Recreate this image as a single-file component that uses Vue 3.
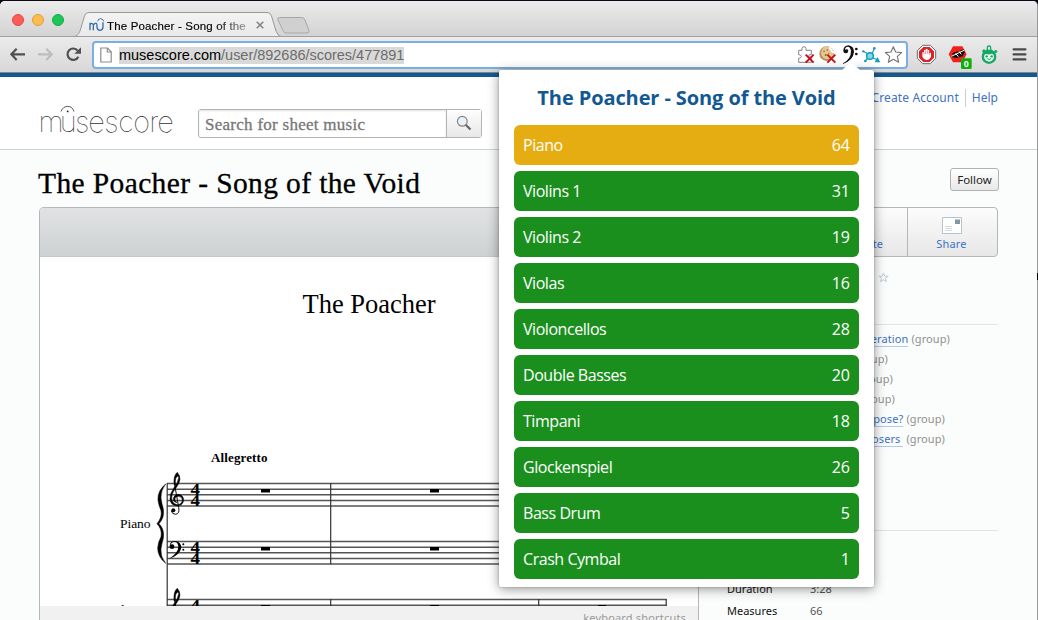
<script setup>
const parts = [
  { name: 'Piano', count: 64, active: true },
  { name: 'Violins 1', count: 31 },
  { name: 'Violins 2', count: 19 },
  { name: 'Violas', count: 16 },
  { name: 'Violoncellos', count: 28 },
  { name: 'Double Basses', count: 20 },
  { name: 'Timpani', count: 18 },
  { name: 'Glockenspiel', count: 26 },
  { name: 'Bass Drum', count: 5 },
  { name: 'Crash Cymbal', count: 1 },
]

const groups = [
  { link: 'eration', width: 237 },
  { link: '', width: 175 },
  { link: '', width: 180 },
  { link: '', width: 182 },
  { link: 'pose?', width: 232 },
  { link: 'osers ', width: 232 },
]

const staffLines = [483.6, 489.2, 494.7, 500.4, 505.9, 541.6, 547.2, 552.8, 558.4, 563.9]
</script>

<template>
  <div class="screen">
    <div class="window">
      <div class="tabstrip">
        <div class="lights">
          <i class="light red"></i><i class="light yellow"></i><i class="light green"></i>
        </div>
        <div class="tab">
          <svg class="tab-shape" width="240" height="25" viewBox="73 12 240 25">
            <defs>
              <linearGradient id="tabg" x1="0" y1="0" x2="0" y2="1">
                <stop offset="0" stop-color="#f3f3f3" />
                <stop offset="1" stop-color="#e9e9e9" />
              </linearGradient>
            </defs>
            <path d="M73 37C78 36 79 33 80 31L84.500 16Q85.500 12.500 89 12.500H267Q270.500 12.500 271.500 16L276 31Q278 36.500 282 37Z" fill="url(#tabg)" stroke="#999" />
            <path d="M279.500 17.500H302Q304 17.500 305 20L309 30.500Q309.500 33 307 33H286Q284 33 283 30.500L278 20Q277 17.500 279.500 17.500Z" fill="#d0d0d0" stroke="#a6a6a6" />
          </svg>
          <svg class="favicon" width="16" height="15" viewBox="267 54 48 45">
            <g fill="none" stroke="#356fa8" stroke-width="4">
              <path d="M270 91V68M270 75Q276 65 280 75V91M280 75Q289 64 291 75V83Q293 91 300 91Q309 90 309 81V67" />
              <path d="M293 64Q294 56 302 56Q310 57 311 64" stroke-width="3" />
            </g>
          </svg>
          <span class="tab-title">The Poacher - Song of the</span>
          <svg class="tab-close" width="8" height="8" viewBox="0 0 8 8"><path d="M.7.7L7.300 7.300M7.300.7L.7 7.300" stroke="#808080" stroke-width="1.500" /></svg>
        </div>
      </div>

      <div class="toolbar">
        <svg width="92" height="35" viewBox="0 111 276 105" fill="none">
          <path d="M34 163H75M50 146L34 163L50 180" stroke="#505050" stroke-width="6.500" />
          <path d="M114 163H155M139 146L155 163L139 180" stroke="#bdbdbd" stroke-width="6.500" />
          <path d="M233 152A17 17 0 1 0 235 170" stroke="#505050" stroke-width="6.500" />
          <path d="M243 142V161H223Z" fill="#505050" />
        </svg>
        <div class="omnibox">
          <svg class="page-icon" width="12" height="16" viewBox="0 0 12 16"><path d="M.8 1H7.500L11.200 4.700V15H.8ZM7.300 1V5H11.200" fill="#fff" stroke="#8c8c8c" stroke-width="1.200" /></svg>
          <span class="url"><b>musescore.com</b>/user/892686/scores/477891</span>
          <span class="spacer"></span>
          <svg width="22" height="24" viewBox="42 129 66 72">
            <path d="M56 151H66V145Q67 140 72 140Q77 140 78 145V151H94V163Q86 163 86 168Q87 173 94 173V187H56V175Q64 174 64 169Q63 164 56 164Z" fill="#fff" stroke="#858585" stroke-width="3" />
            <path d="M77 164L101 188M101 164L77 188" stroke="#c9101c" stroke-width="6" />
          </svg>
          <svg width="22" height="24" viewBox="108 129 66 72">
            <circle cx="140" cy="161" r="22" fill="#b98f52" />
            <circle cx="142" cy="158" r="19" fill="#e4c894" />
            <path d="M150 140Q148 149 155 149Q153 157 164 157" fill="none" stroke="#fff" stroke-width="5" />
            <g fill="#8d6736"><circle cx="132" cy="154" r="2.500" /><circle cx="142" cy="150" r="2.500" /><circle cx="137" cy="165" r="3" /><circle cx="146" cy="160" r="2" /></g>
            <path d="M142 164L166 188M166 164L142 188" stroke="#c9101c" stroke-width="6" />
          </svg>
          <svg width="22" height="24" viewBox="174 129 66 72">
            <path d="M189 190Q213 178 213 154Q212 140 203 140Q195 141 195 149Q203 145 205 152Q204 160 197 160Q189 159 190 150Q192 137 205 136Q222 138 222 156Q220 180 189 192Z" fill="#111" />
            <circle cx="229" cy="147" r="4" fill="#111" /><circle cx="229" cy="162" r="4" fill="#111" />
          </svg>
          <svg width="22" height="24" viewBox="240 129 66 72">
            <g fill="none" stroke="#159bbb" stroke-width="3.500">
              <path d="M250 154L263 161M283 145L277 160M256 183L263 175M278 174L294 180" />
              <circle cx="270" cy="168" r="10" fill="#7fd9ea" stroke-width="4.500" />
            </g>
            <g fill="#159bbb"><circle cx="250" cy="154" r="3.500" /><circle cx="283" cy="145" r="4" /><circle cx="256" cy="183" r="4" /><path d="M284 187L292 171L301 187Z" /></g>
          </svg>
          <svg width="22" height="24" viewBox="306 129 66 72">
            <path d="M340 140L347 156L365 158L352 169L356 187L340 178L325 187L329 169L316 158L333 156Z" fill="#fff" stroke="#777" stroke-width="3.500" stroke-linejoin="round" />
          </svg>
        </div>
        <svg width="129" height="35" viewBox="384 111 387 105">
          <path d="M428 136H451L467 152V175L451 191H428L412 175V152Z" fill="#fff" stroke="#6a6a6a" stroke-width="3" />
          <path d="M430 141H449L462 154V173L449 186H430L417 173V154Z" fill="#d9242a" />
          <path d="M427 158Q430 154 432 158V151Q435 147 437 151V148Q440 144 443 148V151Q447 148 448 153V159Q453 156 453 161V169Q450 180 440 180Q430 178 427 170Z" fill="#fff" />
          <path d="M437 151V162M443 151V162M448 155V164M432 157V164" stroke="#d9242a" stroke-width="1.500" />
          <path d="M519 139H547L560 163L547 187H519L506 163Z" fill="#f02118" />
          <path d="M514 171L519 158L540 152L551 148L554 157L548 169L529 174Z" fill="#111" />
          <path d="M514 169L552 151M527 160L535 170M537 154L544 163" stroke="#fff" stroke-width="3" />
          <rect x="543" y="175" width="32" height="32" rx="4" fill="#0fae0f" />
          <text x="559" y="201" class="badge">0</text>
          <g fill="#16a765">
            <circle cx="627" cy="170" r="22" /><rect x="620" y="136" width="14" height="18" rx="7" />
            <path d="M606 153L612 147L620 156L611 163Z" /><path d="M648 149L653 155L647 160L641 154Z" />
          </g>
          <rect x="624" y="140" width="6" height="10" rx="3" fill="#d9f2e5" />
          <path d="M612 171Q613 160 620 162Q627 165 634 161Q642 161 642 171Q640 184 627 185Q614 183 612 171Z" fill="#e5f6ee" />
          <circle cx="620" cy="169" r="3.500" fill="#16a765" /><circle cx="635" cy="169" r="3.500" fill="#16a765" />
          <path d="M622 176Q627 181 633 176" fill="none" stroke="#16a765" stroke-width="3" />
          <path d="M701 148H736M701 163H736M701 178H736" stroke="#4a4a4a" stroke-width="7" stroke-linecap="round" />
        </svg>
      </div>

      <div class="page">
        <header class="site-head">
          <svg class="logo" width="138" height="36" viewBox="38 103 138 36">
            <text class="logo-text" y="132" x="38.500 59.800 75 88.200 104.200 118.200 133.200 149.200 157.200">musescore</text>
            <path d="M61 111.500Q63 106.400 67.700 106.400Q72.400 106.400 74 111.500" fill="none" stroke="#555" stroke-width="1" />
            <circle cx="67.700" cy="111.400" r=".9" fill="#222" />
          </svg>
          <div class="search">
            <span class="search-field">Search for sheet music</span>
            <span class="search-btn">
              <svg width="16" height="16" viewBox="0 0 16 16"><path d="M9.500 9.500L14.500 14.500" stroke="#666" stroke-width="2.200" /><circle cx="6.300" cy="6.300" r="4.900" fill="#e9f1fa" stroke="#858585" stroke-width="1.200" /></svg>
            </span>
          </div>
          <nav class="account"><a class="create">Create Account</a><a class="help">Help</a></nav>
        </header>

        <div class="title-row">
          <h1>The Poacher - Song of the Void</h1>
          <button class="follow">Follow</button>
        </div>

        <div class="columns">
          <section class="score">
            <div class="score-bar"></div>
            <svg class="sheet" width="658" height="349" viewBox="40 257 658 349">
              <g class="times">
                <text x="302.500" y="312.500" font-size="26.500" textLength="133">The Poacher</text>
                <text x="211" y="461.500" font-size="13" font-weight="bold" textLength="56.500">Allegretto</text>
                <text x="120" y="528" font-size="13.500" textLength="30.500">Piano</text>
                <text x="102" y="613.500" font-size="13.500" textLength="48">Violins 1</text>
              </g>
              <g stroke="#555" stroke-width="1.500">
                <path v-for="y in staffLines" :key="y" :d="`M167 ${y}H510`" />
                <path d="M167 599.600H666.500M167 605.200H666.500" />
                <path d="M167.200 483V606M330.700 483V564.300M330.700 599V606M538.700 599V606M666.200 599V606" stroke="#333" stroke-width="1.200" />
              </g>
              <path d="M261 489H270V492.600H261ZM430 489H439V492.600H430ZM261 547H270V550.600H261ZM430 547H439V550.600H430ZM261 605H270V606H261ZM430 605H439V606H430ZM598 605H606V606H598Z" />
              <g transform="translate(90 440) scale(.33333)">
                <path d="M227 132Q202 152 204 181Q206 196 213 212Q217 232 201 251Q217 268 213 290Q204 306 203 324Q203 351 227 370Q211 350 213 327Q215 312 220 295Q224 267 207 251Q224 234 220 207Q215 190 213 174Q212 151 227 132Z" stroke="#000" stroke-width="1.500" />
                <g id="treble">
                  <path d="M254 134L266 202Q270 221 257 223Q246 222 244 213" fill="none" stroke="#000" stroke-width="2.800" />
                  <circle cx="250" cy="211" r="6" />
                  <path d="M262 97Q270 106 270 118Q268 133 254 149Q244 162 245 176Q248 192 262 194Q277 192 277 179Q275 169 265 169Q253 171 255 181L261 188Q249 186 250 175Q253 163 266 163Q281 166 281 181Q278 198 261 198Q241 196 240 176Q240 160 250 146Q265 127 266 112Q265 108 262 109Q256 113 256 124L257 136L252 134Q250 106 262 97Z" stroke="#000" stroke-width="1.500" />
                </g>
                <use href="#treble" y="348" />
                <circle cx="246" cy="320" r="7" />
                <path d="M239 319Q239 303 256 303Q274 306 274 323Q270 346 237 356Q264 340 265 322Q265 307 254 305Q243 306 241 317Z" />
                <circle cx="280" cy="313" r="3" /><circle cx="280" cy="329" r="3" />
              </g>
              <g class="meter">
                <text transform="translate(190.500 494.800) scale(1.150 1)">4</text>
                <text transform="translate(190.500 505.900) scale(1.150 1)">4</text>
                <text transform="translate(190.500 552.800) scale(1.150 1)">4</text>
                <text transform="translate(190.500 563.900) scale(1.150 1)">4</text>
                <text transform="translate(190.500 610.800) scale(1.150 1)">4</text>
              </g>
            </svg>
            <div class="score-foot">keyboard shortcuts</div>
          </section>

          <aside class="side">
            <div class="actions">
              <a class="action cut">te</a>
              <a class="action share">
                <svg width="20" height="17" viewBox="0 0 20 17"><path d="M.5.5H19.500V16.500H.5Z" fill="#fff" stroke="#b5c5cd" /><path d="M13 2.500H18V7H13Z" fill="#8396a3" /><path d="M3 9.500H10M3 11.500H10M3 13.500H10" stroke="#d5dbdf" /></svg>
                <span>Share</span>
              </a>
            </div>
            <div class="rating">
              <svg width="11" height="11" viewBox="0 0 11 11"><path d="M5.500 1L6.800 4.200H10.200L7.500 6.300L8.500 9.700L5.500 7.800L2.500 9.700L3.500 6.300L.8 4.200H4.200Z" fill="none" stroke="#c3cbd5" /></svg>
            </div>
            <ul class="groups">
              <li v-for="(g, i) in groups" :key="i" :style="{ width: g.width + 'px' }"><a v-if="g.link">{{ g.link }}</a> (group)</li>
            </ul>
            <dl class="facts">
              <div><dt>Duration</dt><dd>3:28</dd></div>
              <div><dt>Measures</dt><dd>66</dd></div>
            </dl>
          </aside>
        </div>
      </div>
    </div>

    <div class="popup">
      <svg class="arrow" width="20" height="10" viewBox="0 0 20 10"><path d="M0 10L10 1L20 10Z" fill="#fff" /></svg>
      <h2>The Poacher - Song of the Void</h2>
      <div v-for="p in parts" :key="p.name" class="part" :class="{ active: p.active }">
        <span class="name">{{ p.name }}</span><span>{{ p.count }}</span>
      </div>
    </div>
    <i class="edge-mark"></i>
  </div>
</template>

<style>
body { margin: 0; overflow: hidden; }
</style>

<style scoped>
.screen { position: relative; width: 1038px; height: 620px; overflow: hidden; background: #0a0a14; font-family: "Noto Sans", sans-serif; box-sizing: border-box; padding-top: 1px; }
.screen * { box-sizing: border-box; }
svg { display: block; flex: none; }
.window { width: 1038px; height: 619px; border-right: 1px solid #999; border-radius: 5px 5px 0 0; overflow: hidden; background: #fbfdfc; }
.tabstrip { height: 35px; display: flex; background: linear-gradient(#ebebeb, #d3d3d3); }
.lights { width: 73px; display: flex; gap: 8px; padding: 13px 0 0 12px; }
.light { width: 12px; height: 12px; border-radius: 50%; border: 1px solid; }
.red { background: #fc5b57; border-color: #e2463f; }
.yellow { background: #fdbc4f; border-color: #e0a137; }
.green { background: #1fc657; border-color: #14ad42; }
.tab { position: relative; width: 210px; display: flex; align-items: center; padding: 12px 0 0 16px; height: 36px; }
.tab-shape { position: absolute; left: 0; top: 11px; }
.favicon { position: relative; }
.tab-title { position: relative; margin: 1px 0 0 2px; width: 149px; font: 11.500px/14px "Liberation Sans", sans-serif; letter-spacing: 0.16px; white-space: nowrap; background: linear-gradient(90deg, #000 108px, #aaa 142px); -webkit-background-clip: text; background-clip: text; color: transparent; -webkit-text-stroke: 0.15px transparent; }
.tab-close { position: relative; }
.toolbar { position: relative; height: 37px; display: flex; border-top: 1px solid #a0a0a0; border-bottom: 1px solid #858585; background: linear-gradient(#ebebeb, #d8d8d8); z-index: 0; }
.omnibox { width: 816px; height: 28px; margin: 4px 0 0; border: 2px solid #79afe2; border-radius: 4px; background: #fff; display: flex; align-items: center; padding: 0 2px 0 6px; }
.url { margin-left: 7px; font: 14.500px/17px "Liberation Sans", sans-serif; letter-spacing: -0.02px; background: #d9d9d9; color: #6c6c6c; white-space: nowrap; width: 285px; }
.url b { font-weight: normal; color: #000; }
.spacer { flex: 1; }
.badge { font: bold 27px "Liberation Sans", sans-serif; fill: #fff; text-anchor: middle; }

.page { border-top: 4px solid #125993; height: 547px; }
.site-head { height: 73px; display: flex; background: #fff; border-bottom: 1px solid #cfd2d3; padding: 0 39px 0 38px; }
.logo { margin-top: 26px; }
.logo-text { font-family: Inter, sans-serif; font-weight: 100; font-size: 29px; fill: #333; }
.search { display: flex; width: 284px; height: 29px; margin: 32px 0 0 22px; border: 1px solid #b0b4b6; border-radius: 3px; }
.search-field { width: 248px; padding-left: 6px; font: 17px/29px "Liberation Serif", serif; color: #777; -webkit-text-stroke: 0.3px #777; letter-spacing: 0.27px; white-space: nowrap; border-right: 1px solid #b0b4b6; box-shadow: inset 0 1px 2px #e2e2e2; }
.search-btn { flex: 1; background: linear-gradient(#fefefe, #e8e8e8); padding: 5px 0 0 9px; }
.account { margin-left: auto; display: flex; margin-top: 12px; font-size: 12px; line-height: 18px; height: 18px; color: #3d72c4; white-space: nowrap; }
.create { padding-right: 6px; border-right: 1px solid #cdcdcd; letter-spacing: 0.12px; }
.help { padding-left: 6px; }
.title-row { height: 57px; display: flex; justify-content: space-between; padding: 0 38px 0 38px; }
h1 { margin: 15px 0 0; font: 29.500px/36px "Liberation Serif", serif; letter-spacing: 0.38px; color: #000; white-space: nowrap; -webkit-text-stroke: 0.3px #000; }
.follow { margin: 18px 0 0; padding: 0; width: 49px; height: 23px; border: 1px solid #b0b3b5; border-radius: 3px; background: linear-gradient(#fff, #e8e8e8); font: 11.500px/19px "Noto Sans", sans-serif; color: #222; }
.columns { display: flex; padding-left: 39px; height: 413px; }
.score { width: 660px; border: 1px solid #b4b8b9; border-bottom: 0; border-radius: 5px 5px 0 0; overflow: hidden; background: #fff; flex: none; }
.score-bar { height: 49px; background: linear-gradient(#e1e2e4, #ced2d3); border-bottom: 1px solid #c5c8c9; }
.times text, .meter text { font-family: "Liberation Serif", serif; }
.meter text { font-weight: bold; font-size: 16.500px; }
.score-foot { height: 20px; background: #f1f1f1; color: #999; font-size: 11px; line-height: 20px; padding: 2px 12px 0 0; text-align: right; letter-spacing: 0.18px; }
.side { width: 285px; margin-left: 14px; font-size: 11px; }
.actions { display: flex; width: 285px; height: 50px; border: 1px solid #b4b7b9; border-radius: 4px; background: linear-gradient(#fcfcfc, #e7e7e7); color: #3d72c4; line-height: 16px; }
.cut { width: 194px; border-right: 1px solid #b4b7b9; padding: 28px 24px 0 0; text-align: right; }
.share { flex: 1; display: flex; flex-direction: column; align-items: center; padding: 9px 2px 0 0; gap: 2px; letter-spacing: 0.15px; }
.rating { height: 68px; border-bottom: 1px solid #e2e4e4; padding: 15px 0 0 165px; }
.groups { list-style: none; margin: 0; padding: 4px 0 0; height: 206px; border-bottom: 1px solid #e2e4e4; color: #8f8f8f; letter-spacing: 0.1px; }
.groups li { height: 20px; line-height: 20px; text-align: right; white-space: nowrap; }
.groups a { color: #3d72c4; border-bottom: 1px solid #b3c9ea; white-space: pre; }
.facts { margin: 0; padding: 47px 0 0 14px; }
.facts div { display: flex; height: 22px; line-height: 22px; }
.facts dt { width: 83px; color: #111; }
.facts dd { margin: 0; color: #555; }

.popup { position: absolute; left: 499px; top: 70px; width: 375px; height: 517px; padding: 11px 15px 0; background: #fff; border-radius: 2px; box-shadow: 0 2px 12px rgba(0, 0, 0, 0.42), 0 0 2px rgba(0, 0, 0, 0.3); font-family: "Open Sans", sans-serif; }
.arrow { position: absolute; left: 342px; top: -9px; }
h2 { margin: 0 0 10px; font: bold 20px/34px "Open Sans", sans-serif; letter-spacing: -0.1px; color: #125993; text-align: center; white-space: nowrap; }
.part { height: 40px; margin-bottom: 6px; padding: 0 9px; border-radius: 6px; background: #1b8f1e; color: #fff; display: flex; justify-content: space-between; font-size: 16px; line-height: 40px; }
.part.active { background: #e5ad11; }
.name { letter-spacing: -0.45px; }
.edge-mark { position: absolute; left: 1037px; top: 273px; width: 1px; height: 7px; background: #000; }
</style>
